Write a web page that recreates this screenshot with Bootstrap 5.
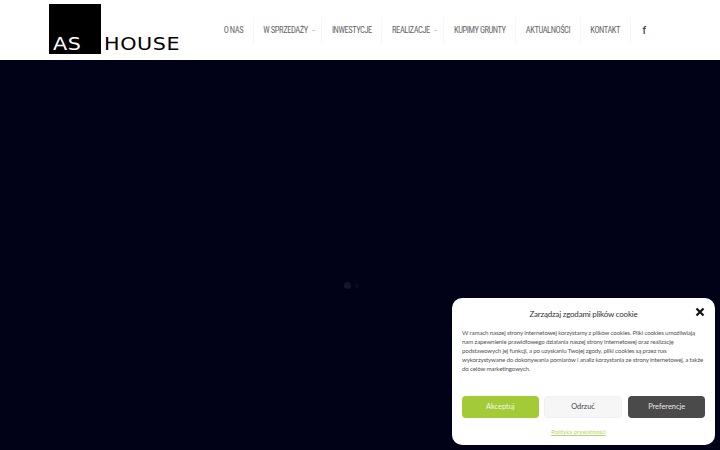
<!DOCTYPE html>
<html lang="pl">
<head>
  <meta charset="UTF-8">
  <title>AS House</title>
  <link href="https://cdn.jsdelivr.net/npm/bootstrap@5.3.0/dist/css/bootstrap.min.css" rel="stylesheet">
  <style>
    html, body { height: 100%; overflow: hidden; }
    body { background: #010118; }
    .top-bar { height: 60px; background: #fff; padding-left: 49px; }
    .logo-box { width: 131px; height: 50px; margin-bottom: 2px; gap: 3px; }
    .logo-square { width: 52px; height: 50px; background: #000; color: #fff; font: 400 18px/1 "DejaVu Sans", sans-serif; padding: 0 0 1px 4px; }
    .logo-word { font: 400 18px/1 "DejaVu Sans", sans-serif; letter-spacing: .5px; color: #000; margin-bottom: 1px; }
    .logo-square span, .logo-word span { display: inline-block; transform: scaleX(1.15); transform-origin: left center; letter-spacing: .5px; }
    .main-menu { margin-left: 34px; margin-top: 1px; }
    .main-menu a { display: flex; align-items: center; height: 28px; padding: 0 9.5px 0 9.7px; border-right: 1px solid #f7f7f7; font: 400 8.5px/1 "Roboto", sans-serif; font-stretch: condensed; letter-spacing: -.45px; color: #666; text-decoration: none; white-space: nowrap; position: relative; }
    .main-menu a.has-sub { padding-right: 13.5px; }
    .main-menu a.has-sub::after { content: ""; position: absolute; right: 6px; top: 13px; width: 3px; height: 1px; background: #ccc; }
    .main-menu a.no-line { border-right: 0; padding-left: 12px; font: 500 10px/1 "Roboto", sans-serif; color: #444; }
    .hero-area { height: 390px; position: relative; }
    .load-dot { position: absolute; border-radius: 50%; background: #14142c; width: 7px; height: 7px; left: 344px; top: 222px; }
    .load-dot.second { background: #0a0a20; width: 4px; height: 4px; left: 355px; top: 224px; }
    .cookie-box { position: fixed; left: 452px; top: 298px; width: 263px; height: 147px; background: #fff; border-radius: 10px; font-family: "Lato", sans-serif; color: #444; padding: 0 10px; }
    .cookie-head { height: 30px; padding-top: 6px; line-height: 14px; }
    .cookie-title { font-size: 8px; letter-spacing: -.2px; color: #333; }
    .cookie-x { position: absolute; right: 10px; top: 9px; }
    .cookie-text { font-size: 6.2px; letter-spacing: -.17px; line-height: 9px; margin: 0; color: #555; height: 45px; width: 243px; white-space: nowrap; }
    .cookie-btns { margin-top: 23px; gap: 5px; }
    .cookie-btn { height: 22px; border-radius: 4px; font-size: 7.4px; display: flex; align-items: center; justify-content: center; }
    .btn-accept { width: 77px; background: #a2cb37; color: #f4f8e4; }
    .btn-deny { width: 79px; background: #f6f6f6; border: 1px solid #f0f0f0; color: #444; }
    .btn-pref { width: 77px; margin-left: 1px; background: #4a4a4a; color: #e8e8e8; }
    .cookie-link { display: block; text-align: center; font-size: 6px; color: #b3d566; margin-top: 9px; padding-right: 10px; }
  </style>
</head>
<body>
  <header class="top-bar d-flex align-items-center">
    <div class="logo-box d-flex align-items-end">
      <div class="logo-square d-flex align-items-end flex-shrink-0"><span>AS</span></div>
      <div class="logo-word"><span>HOUSE</span></div>
    </div>
    <nav class="main-menu d-flex align-items-center">
      <a href="#">O NAS</a>
      <a href="#" class="has-sub">W SPRZEDAŻY</a>
      <a href="#">INWESTYCJE</a>
      <a href="#" class="has-sub">REALIZACJE</a>
      <a href="#">KUPIMY GRUNTY</a>
      <a href="#">AKTUALNOŚCI</a>
      <a href="#">KONTAKT</a>
      <a href="#" class="no-line">f</a>
    </nav>
  </header>

  <main class="hero-area">
    <span class="load-dot"></span>
    <span class="load-dot second"></span>
  </main>

  <div class="cookie-box">
    <div class="cookie-head text-center"><span class="cookie-title">Zarządzaj zgodami plików cookie</span></div>
    <svg class="cookie-x" width="10" height="10" viewBox="0 0 10 10"><path d="M1.5 1.5l7 7M8.5 1.5l-7 7" stroke="#111" stroke-width="2.2" fill="none"/></svg>
    <p class="cookie-text">W ramach naszej strony internetowej korzystamy z plików cookies. Pliki cookies umożliwiają<br>nam zapewnienie prawidłowego działania naszej strony internetowej oraz realizację<br>podstawowych jej funkcji, a po uzyskaniu Twojej zgody, pliki cookies są przez nas<br>wykorzystywane do dokonywania pomiarów i analiz korzystania ze strony internetowej, a także<br>do celów marketingowych.</p>
    <div class="cookie-btns d-flex">
      <div class="cookie-btn btn-accept">Akceptuj</div>
      <div class="cookie-btn btn-deny">Odrzuć</div>
      <div class="cookie-btn btn-pref">Preferencje</div>
    </div>
    <a class="cookie-link" href="#">Polityka prywatności</a>
  </div>

  <script src="https://cdn.jsdelivr.net/npm/bootstrap@5.3.0/dist/js/bootstrap.bundle.min.js"></script>
</body>
</html>
